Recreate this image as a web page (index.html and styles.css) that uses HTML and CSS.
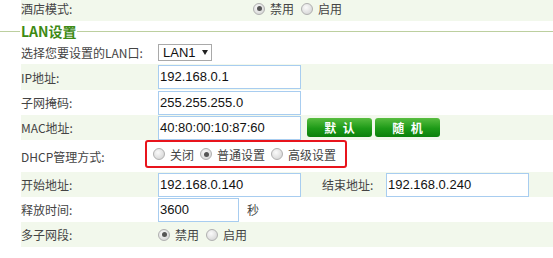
FILE: index.html
```html
<!DOCTYPE html>
<html lang="zh-CN">
<head>
  <meta charset="UTF-8" />
  <title>LAN设置</title>
  <link rel="stylesheet" href="styles.css">
</head>
<body>
  <div class="page">
    <div class="row shaded">
      <div class="label wide">酒店模式:</div>
      <div class="value">
        <label class="opt"><span class="radio on"></span>禁用</label>
        <label class="opt"><span class="radio"></span>启用</label>
      </div>
    </div>

    <div class="legend"><span>LAN设置</span></div>

    <div class="row short">
      <div class="label">选择您要设置的LAN口:</div>
      <div class="value"><span class="select">LAN1<i class="caret"></i></span></div>
    </div>
    <div class="row shaded ip">
      <div class="label">IP地址:</div>
      <div class="value"><span class="field">192.168.0.1</span></div>
    </div>
    <div class="row">
      <div class="label">子网掩码:</div>
      <div class="value"><span class="field">255.255.255.0</span></div>
    </div>
    <div class="row shaded">
      <div class="label">MAC地址:</div>
      <div class="value">
        <span class="field">40:80:00:10:87:60</span>
        <button class="btn first">默 认</button>
        <button class="btn">随 机</button>
      </div>
    </div>
    <div class="row tall">
      <div class="label">DHCP管理方式:</div>
      <div class="value top">
        <div class="mark">
          <label class="opt"><span class="radio"></span>关闭</label>
          <label class="opt"><span class="radio on"></span>普通设置</label>
          <label class="opt"><span class="radio"></span>高级设置</label>
        </div>
      </div>
    </div>
    <div class="row shaded">
      <div class="label">开始地址:</div>
      <div class="value">
        <span class="field">192.168.0.140</span>
        <span class="sublabel">结束地址:</span>
        <span class="field">192.168.0.240</span>
      </div>
    </div>
    <div class="row">
      <div class="label">释放时间:</div>
      <div class="value">
        <span class="field small">3600</span>
        <span class="unit">秒</span>
      </div>
    </div>
    <div class="row shaded">
      <div class="label">多子网段:</div>
      <div class="value">
        <label class="opt"><span class="radio on"></span>禁用</label>
        <label class="opt"><span class="radio"></span>启用</label>
      </div>
    </div>
  </div>
</body>
</html>
```

FILE: styles.css
```css
body {
  margin: 0;
  background: #fff;
  font-family: "Noto Sans CJK SC", "Liberation Sans", sans-serif;
  font-size: 12px;
  color: #444;
}
.page {
  margin-top: -4px;
}
.row {
  display: flex;
  align-items: center;
  height: 25px;
  margin-left: 21px;
}
.row.shaded {
  background: #f2f8ec;
}
.row.short {
  height: 23px;
}
.row.ip {
  height: 26px;
}
.row.tall {
  height: 32px;
}
.label {
  width: 137px;
  flex: none;
}
.label.wide {
  width: 232px;
}
.value {
  display: flex;
  align-items: center;
  white-space: nowrap;
}
.value.top {
  align-self: flex-start;
}
.opt {
  display: inline-flex;
  align-items: center;
  margin-right: 7px;
}
.radio {
  width: 10px;
  height: 10px;
  border-radius: 50%;
  border: 1px solid #b0b0b0;
  background: radial-gradient(circle at 40% 35%, #fafafa, #cfcfcf);
  margin-right: 5px;
  position: relative;
}
.radio.on::after {
  content: "";
  position: absolute;
  left: 2.5px;
  top: 2.5px;
  width: 5px;
  height: 5px;
  border-radius: 50%;
  background: #555;
}
.legend {
  display: flex;
  align-items: center;
  height: 20px;
  font-size: 14px;
  font-weight: bold;
  color: #3d8a14;
}
.legend::before,
.legend::after {
  content: "";
  height: 1px;
  background: #bccf9f;
}
.legend::before {
  width: 20px;
  margin-right: 1px;
}
.legend::after {
  flex: 1;
  margin-left: 1px;
}
.select {
  display: inline-flex;
  align-items: center;
  box-sizing: border-box;
  width: 54px;
  height: 17px;
  border: 1px solid #a9a9a9;
  background: #fff;
  padding-left: 4px;
  font-family: "Liberation Sans", sans-serif;
  font-size: 13px;
  color: #111;
}
.caret {
  width: 0;
  height: 0;
  margin-left: 6px;
  border-left: 3px solid transparent;
  border-right: 3px solid transparent;
  border-top: 5px solid #222;
}
.field {
  display: inline-block;
  box-sizing: border-box;
  width: 143px;
  height: 24px;
  line-height: 22px;
  border: 1px solid #a8cdf0;
  background: #fff;
  padding-left: 1px;
  font-family: "Liberation Sans", sans-serif;
  font-size: 13px;
  color: #111;
}
.field.small {
  width: 81px;
}
.unit {
  margin-left: 8px;
}
.sublabel {
  margin-left: 21px;
  width: 64px;
}
.btn {
  width: 65px;
  height: 19px;
  padding: 0;
  border: none;
  border-radius: 3px;
  background: linear-gradient(#58bd40, #1d9a17 55%, #0b800b);
  color: #fff;
  font-family: "Noto Sans CJK SC", sans-serif;
  font-size: 12px;
  font-weight: bold;
  letter-spacing: 2px;
  text-indent: 2px;
  margin-left: 3px;
}
.btn.first {
  margin-left: 6px;
}
.mark {
  display: flex;
  align-items: center;
  box-sizing: border-box;
  height: 28px;
  width: 202px;
  margin-left: -13px;
  padding-left: 6px;
  border: 2px solid #e8141c;
  border-radius: 3px;
}
.mark .opt {
  margin-right: 6px;
}
```
